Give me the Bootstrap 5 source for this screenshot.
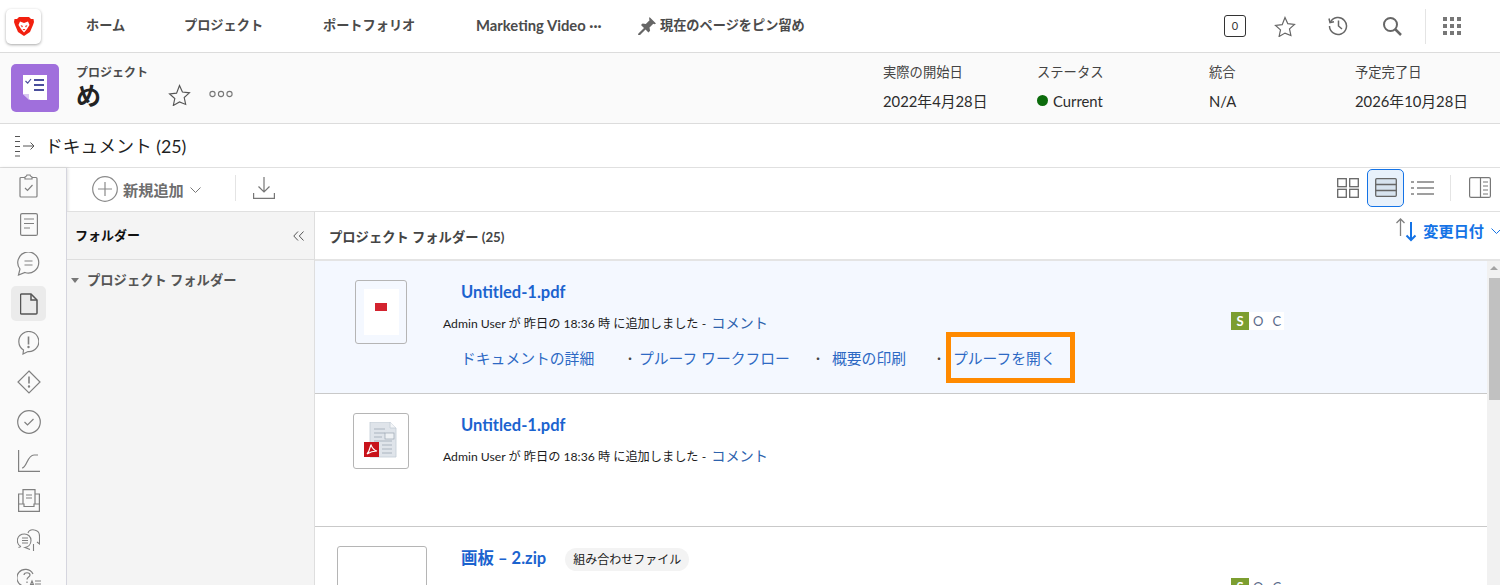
<!DOCTYPE html>
<html lang="ja">
<head>
  <meta charset="UTF-8" />
  <title>ドキュメント</title>
  <link href="https://cdn.jsdelivr.net/npm/bootstrap@5.3.0/dist/css/bootstrap.min.css" rel="stylesheet" />
  <style>
    html, body { height: 585px; overflow: hidden; }
    body { font-family: "Lato", "Noto Sans CJK JP", sans-serif; font-size: 13px; color: #2c2c2c; background: #fff; }
    a { text-decoration: none; }
    svg { display: block; flex: none; }

    .topbar { height: 53px; border-bottom: 1px solid #dcdcdc; }
    .logo-box { width: 35px; height: 35px; margin: 0 0 0 6px; background: #fff; border-radius: 5px; box-shadow: 0 1px 3px rgba(0,0,0,.35); }
    .top-link { color: #4b4b4b; font-weight: 700; font-size: 13.2px; white-space: nowrap; }
    .top-links { margin-left: 45px; }
    .tl-home { width: 98px; }
    .tl-proj { width: 139px; }
    .tl-port { width: 153px; }
    .tl-mark { width: 162px; font-size: 14.8px; margin-bottom: 2px; }
    .top-tools { margin-left: auto; padding-right: 39px; }
    .count-box { width: 22px; height: 22px; border: 1px solid #333; border-radius: 3px; font-size: 11px; color: #333; margin-right: 28px; }
    .tool-star { margin-right: 32px; }
    .tool-hist { margin-right: 34px; }
    .tool-find { margin-right: 23px; }
    .top-sep { width: 1px; height: 35px; background: #e4e4e4; margin-right: 17px; }

    .projbar { height: 71px; background: #fafafa; border-bottom: 1px solid #dcdcdc; }
    .proj-icon { width: 48px; height: 48px; margin-left: 11px; background: #a06fdc; border-radius: 5px; }
    .proj-names { margin: 0 0 2px 17px; width: 92px; }
    .proj-kind { font-size: 12px; font-weight: 700; color: #4b4b4b; line-height: 16px; padding-top: 1px; }
    .proj-name { font-size: 25px; font-weight: 700; line-height: 29px; color: #222; }
    .proj-star { margin-top: 14px; }
    .proj-more { margin: 12px 0 0 18px; }
    .proj-fields { margin: 0 0 3px auto; }
    .fld-lbl { font-size: 13.3px; line-height: 18px; margin-bottom: 10px; color: #444; }
    .fld-val { font-size: 14.8px; line-height: 20px; color: #2c2c2c; }
    .fld-a { width: 154px; }
    .fld-b { width: 172px; }
    .fld-c { width: 146px; }
    .fld-d { width: 145px; }
    .stat-dot { width: 11px; height: 11px; border-radius: 50%; background: #0b6b0b; margin-right: 5px; }

    .titlebar { height: 44px; padding-left: 15px; border-bottom: 1px solid #e0e0e0; }
    .titlebar h1 { font-size: 17.8px; font-weight: 400; margin: 2px 0 0 10px; color: #1f1f1f; }

    .workarea { height: 417px; }
    .side-rail { width: 67px; flex: none; background: #fafafa; border-right: 1px solid #d5d5de; box-shadow: 1px 0 3px rgba(0,0,0,.12); overflow: hidden; }
    .rail-item { width: 35px; height: 35px; margin: 0 0 4.4px 11px; border-radius: 5px; }
    .rail-item.on { background: #ebebeb; }

    .toolrow { height: 44px; border-bottom: 1px solid #e0e0e0; padding: 0 9px 4px 25px; }
    .add-plus { margin-top: 2px; }
    .add-lbl { font-size: 15.2px; font-weight: 700; color: #6e6e6e; margin: 6px 6px 0 5px; }
    .add-caret { margin-top: 4px; }
    .tool-sep { width: 1px; height: 26px; background: #e4e4e4; }
    .sep-add { margin-left: 34px; }
    .dl-icon { margin-left: 17px; }
    .view-on { width: 37px; height: 38px; border: 1px solid #1473e6; border-radius: 5px; background: #e8f1fb; margin: 0 7px 0 8px; }
    .sep-view { margin: 0 18px 0 16px; }

    .split { height: 373px; }
    .folder-pane { width: 248px; flex: none; background: #f4f4f4; border-right: 1px solid #dedede; }
    .pane-head { height: 48px; border-bottom: 1px solid #dedede; padding: 0 10px 0 8px; }
    .pane-title { font-weight: 700; color: #111; font-size: 13px; }
    .tree-line { padding: 11px 0 0 4px; font-weight: 700; color: #555; font-size: 13.3px; }
    .tree-tri { width: 0; height: 0; border-left: 4.5px solid transparent; border-right: 4.5px solid transparent; border-top: 5px solid #777; margin-right: 8px; }

    .docs-pane { min-width: 0; }
    .docs-head { height: 49px; border-bottom: 2px solid #e4e4e4; padding-left: 14px; }
    .docs-title { font-weight: 700; color: #444; font-size: 13.3px; padding-top: 16px; }
    .sort-ctl { padding-top: 6px; }
    .sort-lbl { color: #1473e6; font-weight: 700; font-size: 15.2px; margin: 2px 7px 0 6px; }
    .sort-caret { margin: 10px -2px 0 0; }

    .doc-list { min-width: 0; }
    .doc-row { height: 133px; border-bottom: 1px solid #c9c9c9; }
    .doc-row.sel { background: #f4f8ff; }
    .thumb-col { width: 128px; flex: none; padding-left: 4px; }
    .thumb-wrap { width: 124px; }
    .doc-thumb { border: 1px solid #b5b5b5; border-radius: 3px; background: #fff; }
    .th-a { width: 52px; height: 64px; margin-top: 19px; background: #f4f8ff; }
    .th-a-page { width: 35px; height: 46px; background: #fff; }
    .th-a-mark { width: 12px; height: 8px; background: #d3232f; margin-bottom: 10px; }
    .th-b { width: 56px; height: 56px; margin-top: 19px; }
    .th-c { width: 90px; height: 60px; margin: 19px 0 0 2px; }
    .meta-col { width: 788px; flex: none; }
    .doc-name { color: #1b63cf; font-weight: 700; font-size: 16.5px; line-height: 22px; margin-left: 18px; padding-top: 20px; display: inline-block; }
    .doc-meta { font-size: 12.2px; line-height: 18px; color: #1c1c1c; margin-top: 10px; white-space: nowrap; }
    .doc-meta a { color: #2d62ad; font-size: 14.2px; margin-left: 5px; }
    .act-row { margin: 15px 0 0 18px; font-size: 14.8px; line-height: 20px; position: relative; }
    .act-row a { color: #2d69c4; white-space: nowrap; }
    .act-dot { color: #444; font-size: 12px; margin: 0 8px 0 -4px; }
    .act-dot.near { margin-right: 3px; }
    .act-1 { width: 167px; }
    .act-2 { width: 188px; }
    .act-3 { width: 121px; }
    .proof-box { position: absolute; left: 485px; top: -16px; width: 129px; height: 51px; border: 5px solid #ff8a00; }
    .soc-col { padding-top: 51px; }
    .soc-box { background: #fff; height: 18px; font-size: 13px; line-height: 18px; color: #5a6b8a; padding-right: 3px; }
    .soc-s { width: 18px; background: #7c9e30; color: #fff; text-align: center; margin-right: 4px; font-weight: 700; }
    .soc-gap { margin-left: 9px; }
    .combo-pill { background: #f3f3f3; border-radius: 12px; font-size: 12px; height: 23px; line-height: 23px; padding: 0 8px; margin: 21px 0 0 19px; color: #222; white-space: nowrap; }

    .scroll-rail { width: 13px; flex: none; background: #f1f1f1; }
    .scroll-tri { width: 0; height: 0; border-left: 4px solid transparent; border-right: 4px solid transparent; border-bottom: 4px solid #a3a3a3; margin: 5px 0 8px 3px; }
    .scroll-thumb { height: 122px; margin-left: 2px; background: #c1c1c1; }
  </style>
</head>
<body>

  <!-- Top navigation -->
  <nav class="topbar d-flex align-items-center">
    <div class="logo-box d-flex align-items-center justify-content-center">
      <svg width="20" height="20" viewBox="0 0 20 20"><path d="M5 1H15L17 3 19.500 3 20 6 19 9 16 16 10 20 4 16 1 9 0 6 .5 3 3 3Z" fill="#f2200f"/><path d="M6 5.500L10 7l4-1.500L15.500 9 13 13l-3 3.500L7 13 4.500 9Z" fill="#fff"/><path d="M6.500 9l2.500 1-1 1.500zM13.500 9L11 10l1 1.500zM8.500 13h3L10 14.500z" fill="#f2200f"/></svg>
    </div>
    <div class="top-links d-flex align-items-center">
      <a class="top-link tl-home" href="#">ホーム</a>
      <a class="top-link tl-proj" href="#">プロジェクト</a>
      <a class="top-link tl-port" href="#">ポートフォリオ</a>
      <a class="top-link tl-mark" href="#">Marketing Video ···</a>
      <a class="top-link d-flex align-items-center gap-1" href="#">
        <svg width="18" height="18" viewBox="0 0 18 18" fill="#666"><path d="M11.500 0L18 6.500l-1.500.8-1.200-.5-3.800 3.800.6 3.200-1.600 1.600-3-3-5.500 5.600L0 18l.4-1.500L6 11 3 8l1.600-1.600 3.200.6L11.600 3.200l-.5-1.200z"/></svg>
        現在のページをピン留め
      </a>
    </div>
    <div class="top-tools d-flex align-items-center">
      <div class="count-box d-flex align-items-center justify-content-center">0</div>
      <svg class="tool-star" width="22" height="21" viewBox="0 0 22 21" fill="none" stroke="#666" stroke-width="1.200"><path d="M11 1.500l2.800 6.200 6.700.7-5 4.500 1.400 6.600L11 17.100 5.100 20.500l1.400-6.600-5-4.500 6.700-.7z"/></svg>
      <svg class="tool-hist" width="20" height="20" viewBox="0 0 20 20" fill="none" stroke="#666" stroke-width="1.500"><path d="M2.500 6A8.500 8.500 0 1 1 1.500 10"/><path d="M1 2.500L2 6.500l4-.8"/><path d="M10.500 4.500V10l3.500 3"/></svg>
      <svg class="tool-find" width="20" height="20" viewBox="0 0 20 20" fill="none" stroke="#666" stroke-width="2"><circle cx="8.500" cy="8.500" r="6.500"/><path d="M13 13l6 6" stroke-width="2.500"/></svg>
      <div class="top-sep"></div>
      <svg width="18" height="18" viewBox="0 0 18 18" fill="#777"><rect x="0" y="0" width="4" height="4"/><rect x="7" y="0" width="4" height="4"/><rect x="14" y="0" width="4" height="4"/><rect x="0" y="7" width="4" height="4"/><rect x="7" y="7" width="4" height="4"/><rect x="14" y="7" width="4" height="4"/><rect x="0" y="14" width="4" height="4"/><rect x="7" y="14" width="4" height="4"/><rect x="14" y="14" width="4" height="4"/></svg>
    </div>
  </nav>

  <!-- Project header -->
  <header class="projbar d-flex align-items-center">
    <div class="proj-icon d-flex align-items-center justify-content-center">
      <svg width="24" height="26" viewBox="0 0 24 26"><path d="M0 0h24v25H7l-7-6z" fill="#fff"/><path d="M0 19h6v6z" fill="#d9c6f1"/><path d="M2.500 6l2.200 2.200L8 4" fill="none" stroke="#4a4f9c" stroke-width="1.200"/><path d="M11 4h10v2H11zM11 9h10v2H11zM11 14h10v2H11z" fill="#4a4f9c"/></svg>
    </div>
    <div class="proj-names">
      <div class="proj-kind">プロジェクト</div>
      <div class="proj-name">め</div>
    </div>
    <svg class="proj-star" width="23" height="22" viewBox="0 0 22 21" fill="none" stroke="#555" stroke-width="1.100"><path d="M11 1.500l2.800 6.200 6.700.7-5 4.500 1.400 6.600L11 17.100 5.100 20.500l1.400-6.600-5-4.500 6.700-.7z"/></svg>
    <svg class="proj-more" width="24" height="8" viewBox="0 0 24 8" fill="none" stroke="#777" stroke-width="1.100"><circle cx="3.500" cy="4" r="2.600"/><circle cx="12" cy="4" r="2.600"/><circle cx="20.500" cy="4" r="2.600"/></svg>
    <div class="proj-fields d-flex">
      <div class="fld-a"><div class="fld-lbl">実際の開始日</div><div class="fld-val">2022年4月28日</div></div>
      <div class="fld-b"><div class="fld-lbl">ステータス</div><div class="fld-val d-flex align-items-center"><span class="stat-dot"></span>Current</div></div>
      <div class="fld-c"><div class="fld-lbl">統合</div><div class="fld-val">N/A</div></div>
      <div class="fld-d"><div class="fld-lbl">予定完了日</div><div class="fld-val">2026年10月28日</div></div>
    </div>
  </header>

  <!-- Section title -->
  <div class="titlebar d-flex align-items-center">
    <svg width="20" height="22" viewBox="0 0 20 22" fill="none" stroke="#555" stroke-width="1"><path d="M0 1.500h6M0 6.500h6M0 11.500h6M0 16.500h6M0 21h6" stroke-dasharray="5 1"/><path d="M8 11h11M15.500 7.500L19 11l-3.500 3.500"/></svg>
    <h1>ドキュメント (25)</h1>
  </div>

  <div class="workarea d-flex">
    <!-- Left icon rail -->
    <aside class="side-rail">
      <div class="rail-item d-flex align-items-center justify-content-center"><svg width="20" height="24" viewBox="0 0 20 24" fill="none" stroke="#808080" stroke-width="1.200"><path d="M6 3.500H2a1 1 0 0 0-1 1V22a1 1 0 0 0 1 1h15a1 1 0 0 0 1-1V4.500a1 1 0 0 0-1-1h-4"/><path d="M6 5V3c1-.5 2-1 2-2h3c0 1 1 1.500 2 2v2z"/><path d="M6 14l2.500 2.500L13.500 11"/></svg></div>
      <div class="rail-item d-flex align-items-center justify-content-center"><svg width="18" height="23" viewBox="0 0 18 23" fill="none" stroke="#808080" stroke-width="1.200"><rect x=".6" y=".6" width="16.800" height="21.800" rx="1.500"/><path d="M4 6h10M4 10.500h10M4 15h6"/></svg></div>
      <div class="rail-item d-flex align-items-center justify-content-center"><svg width="23" height="24" viewBox="0 0 23 24" fill="none" stroke="#808080" stroke-width="1.200"><path d="M1.500 23l1.500-6A10.500 10.500 0 1 1 8 20.500z"/><path d="M7.500 9h8M7.500 13h8"/></svg></div>
      <div class="rail-item on d-flex align-items-center justify-content-center"><svg width="18" height="22" viewBox="0 0 18 22" fill="none" stroke="#555" stroke-width="1.500"><path d="M1.500 1h9.500l6 6v13a1 1 0 0 1-1 1H1.500a1 1 0 0 1-1-1V2a1 1 0 0 1 1-1z"/><path d="M11 1v6h6"/></svg></div>
      <div class="rail-item d-flex align-items-center justify-content-center"><svg width="21" height="24" viewBox="0 0 21 24" fill="none" stroke="#808080" stroke-width="1.200"><path d="M5 23l.5-4A10 10 0 1 1 10 20.500z"/><path d="M10.500 5.500v8" stroke-width="1.600"/><circle cx="10.500" cy="16" r=".6"/></svg></div>
      <div class="rail-item d-flex align-items-center justify-content-center"><svg width="24" height="24" viewBox="0 0 24 24" fill="none" stroke="#808080" stroke-width="1.200"><path d="M12 1l11 11-11 11L1 12z"/><path d="M12 6.500v7" stroke-width="1.600"/><circle cx="12" cy="16.500" r=".6"/></svg></div>
      <div class="rail-item d-flex align-items-center justify-content-center"><svg width="24" height="24" viewBox="0 0 24 24" fill="none" stroke="#808080" stroke-width="1.200"><circle cx="12" cy="12" r="11.300"/><path d="M7.500 12l3 3 6-6"/></svg></div>
      <div class="rail-item d-flex align-items-center justify-content-center"><svg width="22" height="22" viewBox="0 0 22 22" fill="none" stroke="#808080" stroke-width="1.200"><path d="M.6 0v21.400H22"/><path d="M4 18c5 0 5-13 12-13h4"/></svg></div>
      <div class="rail-item d-flex align-items-center justify-content-center"><svg width="22" height="23" viewBox="0 0 22 23" fill="none" stroke="#808080" stroke-width="1.200"><path d="M5 5H.6v17.400h20.800V5H17"/><path d="M.6 15H6v2.500h10V15h5.400"/><path d="M5 15V.6h12V15"/><path d="M8 6h6M8 9h6"/></svg></div>
      <div class="rail-item d-flex align-items-center justify-content-center"><svg width="23" height="23" viewBox="0 0 23 23" fill="none" stroke="#808080" stroke-width="1.100"><path d="M4 17.500C.5 16 0 13.500.5 10 1.500 6.500 4 5 7.500 5c3.500 0 6.500 2.500 6.500 6.500S11 18 8 18.500l5 2"/><path d="M4 17.500l-2.500 1"/><path d="M5 9h6M5 11.500h6M5 14h6"/><path d="M11 4c1-3 4-3.500 6.500-3 3 .5 5 3 5 6v8l-2.500-2"/><path d="M16.500 15v7"/></svg></div>
      <div class="rail-item d-flex align-items-center justify-content-center"><svg width="24" height="24" viewBox="0 0 24 24" fill="none" stroke="#808080" stroke-width="1.200"><path d="M16 7A8.500 8.500 0 1 0 6 19l-.5 4"/><path d="M7 8c0-3 6-3 6 0 0 2-3 2-3 4.500M10 14.500v1.500"/><path d="M13 19l2-5 2 5M14 17.500h2M18 14h6M18 17h6"/></svg></div>
    </aside>

    <main class="flex-grow-1 docs-pane">
      <!-- Toolbar -->
      <div class="toolrow d-flex align-items-center">
        <svg class="add-plus" width="26" height="26" viewBox="0 0 26 26" fill="none" stroke="#8a8a8a" stroke-width="1.200"><circle cx="13" cy="13" r="12.300"/><path d="M13 6v14M6 13h14"/></svg>
        <span class="add-lbl">新規追加</span>
        <svg class="add-caret" width="11" height="6" viewBox="0 0 11 6" fill="none" stroke="#777"><path d="M.5.500l5 5 5-5"/></svg>
        <div class="tool-sep sep-add"></div>
        <svg class="dl-icon" width="22" height="22" viewBox="0 0 22 22" fill="none" stroke="#777" stroke-width="1.200"><path d="M11 0v15M5.500 9.500L11 15l5.500-5.500"/><path d="M.6 16v5.400h20.800V16"/></svg>
        <div class="d-flex align-items-center ms-auto">
          <svg width="22" height="20" viewBox="0 0 22 20" fill="none" stroke="#666" stroke-width="1.300"><rect x=".7" y=".7" width="8.600" height="8"/><rect x="12.700" y=".7" width="8.600" height="8"/><rect x=".7" y="11.300" width="8.600" height="8"/><rect x="12.700" y="11.300" width="8.600" height="8"/></svg>
          <div class="view-on d-flex align-items-center justify-content-center">
            <svg width="22" height="19" viewBox="0 0 22 19" stroke="#666" stroke-width="1.300"><rect x=".7" y=".7" width="20.600" height="17.600" rx="1" fill="#d7e3ef"/><path d="M.7 6.500h20.600M.7 12.500h20.600"/></svg>
          </div>
          <svg width="23" height="14" viewBox="0 0 23 14" stroke="#808080" stroke-width="1.500"><path d="M0 1h3M6 1h17M0 7h3M6 7h17M0 13h3M6 13h17"/></svg>
          <div class="tool-sep sep-view"></div>
          <svg width="22" height="21" viewBox="0 0 22 21" fill="none" stroke="#777" stroke-width="1.200"><rect x=".6" y=".6" width="20.800" height="19.800" rx="1.500"/><path d="M11.500.6v19.800M14 5h5M14 9h5M14 13h5M14 17h5"/></svg>
        </div>
      </div>

      <div class="split d-flex">
        <!-- Folders -->
        <section class="folder-pane">
          <div class="pane-head d-flex align-items-center justify-content-between">
            <span class="pane-title">フォルダー</span>
            <svg width="11" height="10" viewBox="0 0 11 10" fill="none" stroke="#555"><path d="M5 .5L.8 5 5 9.500M10.500.5L6.300 5l4.200 4.500"/></svg>
          </div>
          <div class="tree-line d-flex align-items-center"><span class="tree-tri"></span>プロジェクト フォルダー</div>
        </section>

        <!-- Documents -->
        <section class="docs-pane flex-grow-1">
          <div class="docs-head d-flex justify-content-between">
            <div class="docs-title">プロジェクト フォルダー (25)</div>
            <div class="sort-ctl d-flex align-items-start">
              <svg width="21" height="24" viewBox="0 0 21 24" fill="none"><path d="M4.500 18V1M.5 5l4-4 4 4" stroke="#808080" stroke-width="1.300"/><path d="M15 4v18M10.500 17.500L15 22l4.500-4.500" stroke="#1473e6" stroke-width="2"/></svg>
              <span class="sort-lbl">変更日付</span>
              <svg class="sort-caret" width="11" height="6" viewBox="0 0 11 6" fill="none" stroke="#1473e6"><path d="M.5.500l5 5 5-5"/></svg>
            </div>
          </div>

          <div class="d-flex">
            <div class="doc-list flex-grow-1">
              <!-- Row 1 -->
              <div class="doc-row sel d-flex">
                <div class="thumb-col"><div class="thumb-wrap d-flex justify-content-center">
                  <div class="doc-thumb th-a d-flex align-items-center justify-content-center">
                    <div class="th-a-page d-flex align-items-center justify-content-center"><div class="th-a-mark"></div></div>
                  </div>
                </div></div>
                <div class="meta-col">
                  <a class="doc-name" href="#">Untitled-1.pdf</a>
                  <div class="doc-meta">Admin User が 昨日の 18:36 時 に追加しました -<a href="#">コメント</a></div>
                  <div class="act-row d-flex">
                    <a class="act-1" href="#">ドキュメントの詳細</a>
                    <a class="act-2" href="#"><span class="act-dot near">・</span>プルーフ ワークフロー</a>
                    <a class="act-3" href="#"><span class="act-dot">・</span>概要の印刷</a>
                    <a href="#"><span class="act-dot">・</span>プルーフを開く</a>
                    <div class="proof-box"></div>
                  </div>
                </div>
                <div class="soc-col">
                  <div class="soc-box d-inline-flex"><span class="soc-s">S</span><span>O</span><span class="soc-gap">C</span></div>
                </div>
              </div>

              <!-- Row 2 -->
              <div class="doc-row d-flex">
                <div class="thumb-col"><div class="thumb-wrap d-flex justify-content-center">
                  <div class="doc-thumb th-b d-flex align-items-center justify-content-center">
                    <svg width="34" height="38" viewBox="0 0 34 38"><path d="M6 0h20l6 6v29H6z" fill="#dfe4ea" stroke="#c2ccd6" stroke-width=".8"/><path d="M26 0v6h6" fill="#f3f5f7" stroke="#c2ccd6" stroke-width=".8"/><path d="M10 7h11M10 11h11M10 15h8M10 19h18M18 23h10M18 27h10M18 31h10" stroke="#aab4bf" stroke-width="1"/><rect x="21" y="11" width="9" height="6" fill="#eef1f4" stroke="#9aa5b1" stroke-width=".7"/><rect x="0" y="20" width="15" height="15" fill="#c8121a"/><path d="M3 32c3-3 3-8 4-9 1 2 2 5 6 6-4 0-7 1-10 3z" fill="none" stroke="#fff" stroke-width="1.200"/></svg>
                  </div>
                </div></div>
                <div class="meta-col">
                  <a class="doc-name" href="#">Untitled-1.pdf</a>
                  <div class="doc-meta">Admin User が 昨日の 18:36 時 に追加しました -<a href="#">コメント</a></div>
                </div>
              </div>

              <!-- Row 3 -->
              <div class="doc-row d-flex">
                <div class="thumb-col"><div class="thumb-wrap d-flex justify-content-center">
                  <div class="doc-thumb th-c"></div>
                </div></div>
                <div class="meta-col">
                  <div class="d-flex align-items-start">
                    <a class="doc-name" href="#">画板 – 2.zip</a>
                    <span class="combo-pill">組み合わせファイル</span>
                  </div>
                </div>
                <div class="soc-col">
                  <div class="soc-box d-inline-flex"><span class="soc-s">S</span><span>O</span><span class="soc-gap">C</span></div>
                </div>
              </div>
            </div>

            <div class="scroll-rail">
              <div class="scroll-tri"></div>
              <div class="scroll-thumb"></div>
            </div>
          </div>
        </section>
      </div>
    </main>
  </div>

  <script src="https://cdn.jsdelivr.net/npm/bootstrap@5.3.0/dist/js/bootstrap.bundle.min.js"></script>
</body>
</html>
